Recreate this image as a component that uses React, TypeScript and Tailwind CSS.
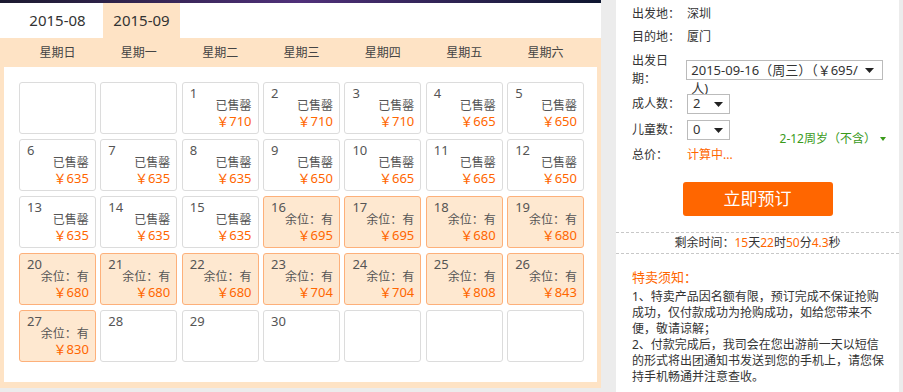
import React from "react";

type Day = { d?: number; price?: number; open?: boolean };

const sold: Record<number, number> = {
  1: 710, 2: 710, 3: 710, 4: 665, 5: 650, 6: 635, 7: 635, 8: 635,
  9: 650, 10: 665, 11: 665, 12: 650, 13: 635, 14: 635, 15: 635,
};
const open: Record<number, number> = {
  16: 695, 17: 695, 18: 680, 19: 680, 20: 680, 21: 680, 22: 680,
  23: 704, 24: 704, 25: 808, 26: 843, 27: 830,
};

const days: Day[] = [
  {}, {},
  ...Array.from({ length: 30 }, (_, i) => {
    const d = i + 1;
    if (sold[d]) return { d, price: sold[d] };
    if (open[d]) return { d, price: open[d], open: true };
    return { d };
  }),
  {}, {}, {},
];

const weekdays = ["星期日", "星期一", "星期二", "星期三", "星期四", "星期五", "星期六"];

function Caret() {
  return (
    <svg width="9" height="5" viewBox="0 0 9 5" className="shrink-0">
      <path d="M0 0h9L4.5 5z" fill="#222" />
    </svg>
  );
}

function Cell({ day }: { day: Day }) {
  const cls = day.open
    ? "bg-[#fee8d0] border-[#fdb07a]"
    : "bg-white border-[#dcdcdc]";
  return (
    <div className={`h-[52px] rounded-[3px] border ${cls} pt-[4px] pl-[7px] pr-[6px] text-[#555]`}>
      {day.d && <div className="text-[13px] leading-[13px]">{day.d}</div>}
      {day.price && (
        <>
          <div className="text-right text-[12px] leading-[12px]">{day.open ? "余位：有" : "已售罄"}</div>
          <div className="text-right text-[13px] leading-[18px] text-[#ff6600]">￥{day.price}</div>
        </>
      )}
    </div>
  );
}

export default function App() {
  return (
    <div className="w-[903px] h-[392px] bg-[#ececec] flex font-['Noto_Sans','Noto_Sans_CJK_SC',sans-serif] text-[#333] overflow-hidden">
      {/* calendar */}
      <div className="w-[601px] shrink-0 h-[388px] flex flex-col">
        <div className="h-[3px] bg-linear-to-r from-[#1c1a30] via-[#50307a] to-[#0e1630]" />
        <div className="h-[35px] bg-white flex pl-[19px] gap-[7px]">
          <div className="w-[77px] flex items-center justify-center text-[15px]">2015-08</div>
          <div className="w-[77px] flex items-center justify-center text-[15px] bg-[#fee3c5]">2015-09</div>
        </div>
        <div className="h-[29px] bg-[#fee3c5] grid grid-cols-7 gap-x-[4.5px] pl-[19px] pr-[17px] items-center text-[12px] text-[#444]">
          {weekdays.map((w) => (
            <div key={w} className="text-center">{w}</div>
          ))}
        </div>
        <div className="flex-1 bg-white border-[#fee3c5] border-x-4 border-b-[6px] pt-[15px] pl-[15px] pr-[13px]">
          <div className="grid grid-cols-7 gap-x-[4.5px] gap-y-[5px]">
            {days.map((day, i) => (
              <Cell key={i} day={day} />
            ))}
          </div>
        </div>
      </div>

      {/* booking panel */}
      <div className="ml-[15px] w-[283px] h-[392px] bg-white pt-[2px] text-[12px]">
        <div className="px-[16px]">
          <div className="h-[23px] flex items-center">
            <span className="w-[55px]">出发地：</span>
            <span>深圳</span>
          </div>
          <div className="h-[23px] flex items-center">
            <span className="w-[55px]">目的地：</span>
            <span>厦门</span>
          </div>
          <div className="h-[43px] flex items-center">
            <span className="w-[55px] leading-[18px]">出发日<br />期：</span>
            <div className="w-[199px] h-[20px] border border-[#bbb] flex items-start pl-[4px] pr-[8px]">
              <span className="w-[170px] leading-[18px] text-[13px]">2015-09-16（周三）（￥695/人)</span>
              <span className="ml-auto mt-[7px]"><Caret /></span>
            </div>
          </div>
          <div className="h-[26px] flex items-center">
            <span className="w-[55px]">成人数：</span>
            <div className="w-[43px] h-[20px] border border-[#bbb] flex items-center pl-[5px] pr-[6px] text-[13px]">
              <span>2</span>
              <span className="ml-auto"><Caret /></span>
            </div>
          </div>
          <div className="h-[26px] flex items-start">
            <span className="w-[55px] leading-[26px]">儿童数：</span>
            <div className="mt-[3px] w-[43px] h-[20px] border border-[#bbb] flex items-center pl-[5px] pr-[6px] text-[13px]">
              <span>0</span>
              <span className="ml-auto"><Caret /></span>
            </div>
            <span className="ml-auto mr-[-3px] mt-[13px] leading-[18px] text-[12px] text-[#3a9a1a] flex items-center gap-[4px]">
              2-12周岁（不含）
              <svg width="6" height="4" viewBox="0 0 6 4"><path d="M0 0h6L3 4z" fill="#3a9a1a" /></svg>
            </span>
          </div>
          <div className="h-[24px] flex items-center">
            <span className="w-[55px]">总价：</span>
            <span className="text-[#ff6600]">计算中...</span>
          </div>
          <div className="flex justify-center mt-[15px]">
            <button className="w-[150px] h-[34px] rounded-[3px] bg-[#ff6600] text-white text-[17px]">
              立即预订
            </button>
          </div>
        </div>
        <div className="mt-[16px] border-t border-b border-dashed border-[#c8c8c8] h-[22px] flex items-center justify-center">
          <span>
            剩余时间：<span className="text-[#ff6600]">15</span>天<span className="text-[#ff6600]">22</span>时
            <span className="text-[#ff6600]">50</span>分<span className="text-[#ff6600]">4.3</span>秒
          </span>
        </div>
        <div className="pl-[16px] pr-[8px] pt-[14px]">
          <div className="text-[13px] leading-[18px] text-[#ff6600]">特卖须知：</div>
          <div className="mt-[3px] text-[12px] leading-[16px] text-[#333] whitespace-nowrap">
            1、特卖产品因名额有限，预订完成不保证抢购<br />
            成功，仅付款成功为抢购成功，如给您带来不<br />
            便，敬请谅解；<br />
            2、付款完成后，我司会在您出游前一天以短信<br />
            的形式将出团通知书发送到您的手机上，请您保<br />
            持手机畅通并注意查收。
          </div>
        </div>
      </div>
    </div>
  );
}
